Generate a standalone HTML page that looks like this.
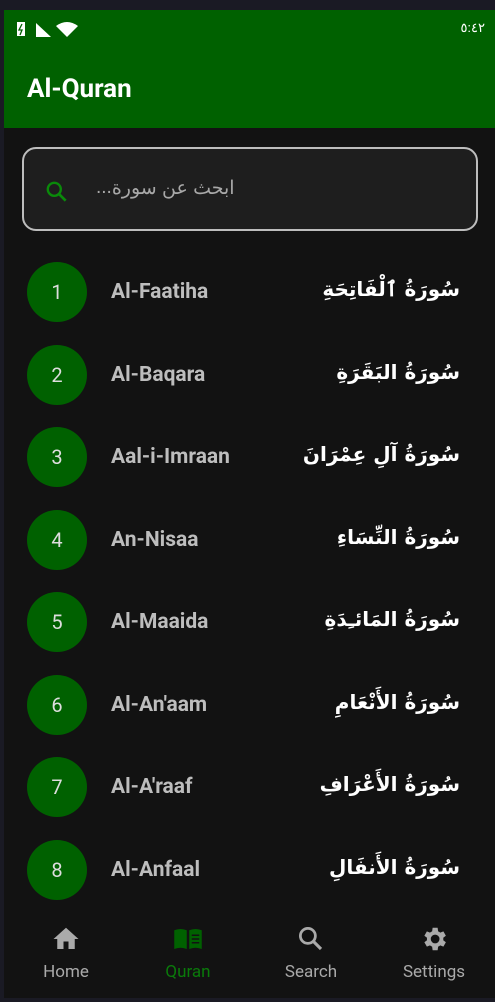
<!DOCTYPE html>
<html><head><meta charset="utf-8"><style>
*{margin:0;padding:0;box-sizing:border-box}
body{width:495px;height:1002px;background:#1a1a24;position:relative;overflow:hidden;font-family:"Roboto","Liberation Sans",sans-serif}
#app{position:absolute;left:4px;top:10px;right:0;bottom:4px;background:#121212;overflow:hidden}
#hdr{position:absolute;left:0;top:0;right:0;height:118px;background:#006100}
.t{position:absolute;left:23px;top:64px;color:#fff;font-weight:bold;font-size:26px}
.time{position:absolute;right:10px;top:10px;color:#fff;font-size:13px;font-family:"Liberation Sans","Noto Sans CJK SC",sans-serif}
#sb{position:absolute;left:18px;top:137px;width:456px;height:84px;border:2px solid #bdbdbd;border-radius:14px;background:#1e1e1e}
.ph{position:absolute;left:72px;top:28px;color:#a8a8a8;font-size:19px;font-family:"Liberation Sans","Noto Sans CJK SC",sans-serif;display:flex;direction:ltr}
.row{position:absolute;left:0;right:0;height:82px}
.c{position:absolute;left:23px;top:0;width:60px;height:60px;border-radius:50%;background:#006100;color:#ddd;font-size:20px;text-align:center;line-height:60px}
.n{position:absolute;left:107px;top:18px;color:#bdbdbd;font-weight:bold;font-size:21px}
.a{position:absolute;right:35px;top:15px;color:#fff;font-weight:bold;font-size:20px;direction:rtl;font-family:"DejaVu Sans","Noto Sans CJK SC",sans-serif}
.nav{position:absolute;top:914px;width:124px;text-align:center;font-size:17px;color:#aaa}
.nav svg{display:block;margin:0 auto 8px}
</style></head><body>
<div id="app">
<div id="hdr">
<svg style="position:absolute;left:10px;top:10px" width="70" height="20" viewBox="0 0 70 20"><rect x="3" y="2" width="8" height="14" fill="#fff"/><path d="M8 4 5 10h3l-2 5" stroke="#006100" stroke-width="1.3" fill="none"/><path d="M22 3v14h15z" fill="#fff"/><path d="M42 6q11-8 22 0l-11 11z" fill="#fff"/></svg>
<div class="time">٥:٤٢</div>
<div class="t">Al-Quran</div>
</div>
<div id="sb"><svg style="position:absolute;left:20px;top:30px" width="26" height="26" viewBox="0 0 24 24"><circle cx="9.5" cy="9.5" r="6" stroke="#0a8a0a" stroke-width="2.2" fill="none"/><path d="M14 14l6 6" stroke="#0a8a0a" stroke-width="2.5"/></svg><div class="ph"><span>...</span><span>ابحث عن سورة</span></div></div>
<div class="row" style="top:252px"><div class="c">1</div><div class="n">Al-Faatiha</div><div class="a">سُورَةُ ٱلْفَاتِحَةِ</div></div>
<div class="row" style="top:335px"><div class="c">2</div><div class="n">Al-Baqara</div><div class="a">سُورَةُ البَقَرَةِ</div></div>
<div class="row" style="top:417px"><div class="c">3</div><div class="n">Aal-i-Imraan</div><div class="a">سُورَةُ آلِ عِمْرَانَ</div></div>
<div class="row" style="top:500px"><div class="c">4</div><div class="n">An-Nisaa</div><div class="a">سُورَةُ النِّسَاءِ</div></div>
<div class="row" style="top:582px"><div class="c">5</div><div class="n">Al-Maaida</div><div class="a">سُورَةُ المَائـِدَةِ</div></div>
<div class="row" style="top:665px"><div class="c">6</div><div class="n">Al-An'aam</div><div class="a">سُورَةُ الأَنْعَامِ</div></div>
<div class="row" style="top:747px"><div class="c">7</div><div class="n">Al-A'raaf</div><div class="a">سُورَةُ الأَعْرَافِ</div></div>
<div class="row" style="top:830px"><div class="c">8</div><div class="n">Al-Anfaal</div><div class="a">سُورَةُ الأَنفَالِ</div></div>
<div class="nav" style="left:0"><svg width="32" height="30" viewBox="0 0 24 24"><path d="M10 20v-6h4v6h5v-8h3L12 3 2 12h3v8z" fill="#aaa"/></svg>Home</div>
<div class="nav" style="left:122px;color:#0a7a0a"><svg width="36" height="30" viewBox="0 0 24 24"><path d="M1 5q5-2 10 0v15q-5-2-10 0zM13 5q5-2 10 0v15q-5-2-10 0z" fill="#006100"/><path d="M15 9h6M15 12h6M15 15h6" stroke="#121212" stroke-width="1.2"/></svg>Quran</div>
<div class="nav" style="left:245px"><svg width="30" height="30" viewBox="0 0 24 24"><circle cx="9.5" cy="9.5" r="6" stroke="#aaa" stroke-width="2.2" fill="none"/><path d="M14 14l6 6" stroke="#aaa" stroke-width="2.5"/></svg>Search</div>
<div class="nav" style="left:368px"><svg width="30" height="30" viewBox="0 0 24 24"><path d="M19.4 13a7.5 7.5 0 000-2l2.1-1.6-2-3.5-2.5 1a7 7 0 00-1.7-1L14.9 3h-4l-.4 2.9a7 7 0 00-1.7 1l-2.5-1-2 3.5L6.4 11a7.5 7.5 0 000 2l-2.1 1.6 2 3.5 2.5-1a7 7 0 001.7 1l.4 2.9h4l.4-2.9a7 7 0 001.7-1l2.5 1 2-3.5zM12.9 15.5a3.5 3.5 0 110-7 3.5 3.5 0 010 7z" fill="#aaa"/></svg>Settings</div>
</div>
</body></html>
